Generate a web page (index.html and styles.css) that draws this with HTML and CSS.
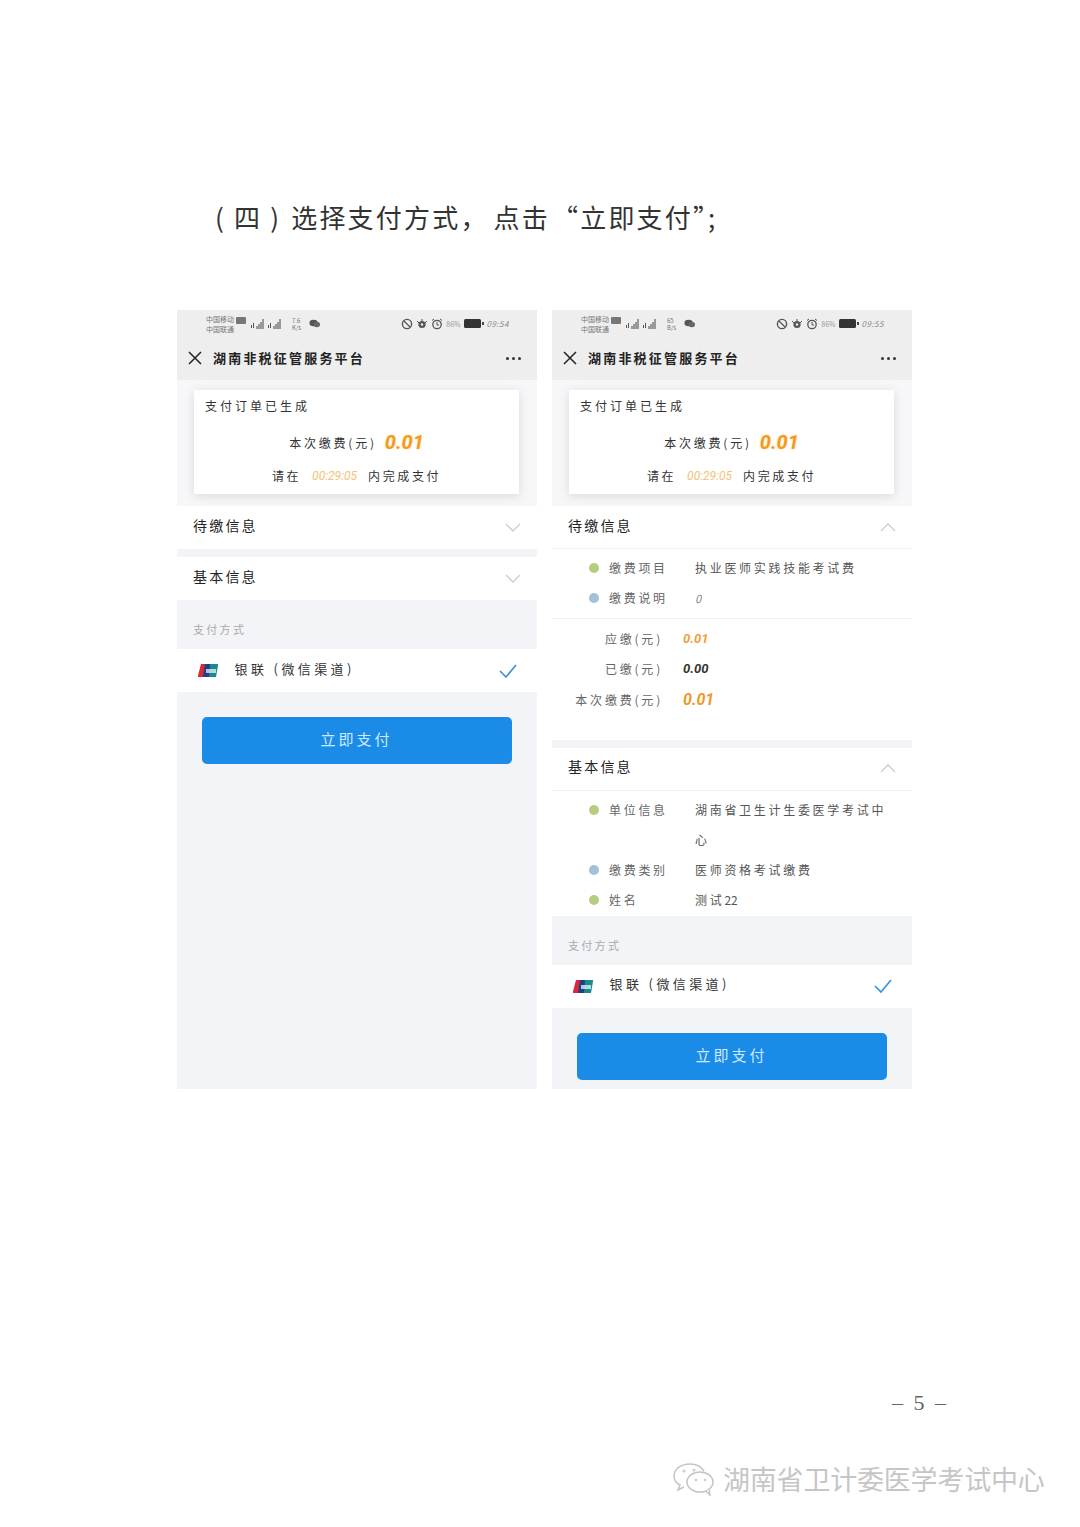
FILE: index.html
```html
<!DOCTYPE html>
<html lang="zh">
<head>
  <meta charset="utf-8">
  <link rel="stylesheet" href="styles.css">
</head>
<body>
  <h1 class="step-title"><span class="paren">(</span>四<span class="paren">)</span>选择支付方式，<span class="after-comma">点击</span><span class="quote-open">“</span>立即支付<span class="tail">”;</span></h1>

  <div class="phones">
    <!-- left: sections collapsed -->
    <div class="phone">
      <div class="top-bar">
        <div class="status-bar">
          <div class="carrier"><span>中国移动</span><span>中国联通</span></div>
          <svg class="hd" viewBox="0 0 10 7"><rect width="10" height="7" rx="1" fill="#777"/></svg>
          <svg class="signal" viewBox="0 0 32 11"><path d="M2 10V7M4 10V5" stroke="#555" fill="none"/><path d="M7 11V8h1v3zM9 11V6h1v5zM11 11V4h1v7zM13 11V1h1v10z" fill="#444"/><path d="M19 10V7M21 10V5" stroke="#555" fill="none"/><path d="M24 11V8h1v3zM26 11V6h1v5zM28 11V4h1v7zM30 11V1h1v10z" fill="#444"/></svg>
          <div class="speed"><span>7.6</span><span>K/s</span></div>
          <svg class="chat" viewBox="0 0 12 9"><ellipse cx="5" cy="4" rx="4.5" ry="3.5" fill="#555"/><ellipse cx="8.5" cy="5.5" rx="3.5" ry="3" fill="#666"/></svg>
          <div class="status-right">
            <svg class="st-icon" viewBox="0 0 12 12"><circle cx="6" cy="6" r="4.6" fill="none" stroke="#555" stroke-width="1.4"/><path d="M3 3l6 6" stroke="#555" stroke-width="1.2"/></svg>
            <svg class="st-icon" viewBox="0 0 12 12"><circle cx="6" cy="6.5" r="3.6" fill="#555"/><path d="M1 3l2 2M11 3L9 5M6 1v3" stroke="#555"/><circle cx="6" cy="6.5" r="1.2" fill="#eee"/></svg>
            <svg class="st-icon" viewBox="0 0 12 12"><circle cx="6" cy="6.5" r="4.2" fill="none" stroke="#555" stroke-width="1.3"/><path d="M6 4v3h2M1 2.5L3 1M11 2.5L9 1" stroke="#555" fill="none"/></svg>
            <span class="pct">86%</span>
            <svg class="battery" viewBox="0 0 20 9"><rect width="17" height="9" rx="1.5" fill="#333"/><rect x="18" y="3" width="2" height="3" fill="#444"/></svg>
            <span class="clock">09:54</span>
          </div>
        </div>
        <div class="nav-bar">
          <svg class="close" viewBox="0 0 14 14"><path d="M1 1l12 12M13 1L1 13" stroke="#222" stroke-width="1.5" fill="none"/></svg>
          <span class="nav-title">湖南非税征管服务平台</span>
          <span class="more"><i></i><i></i><i></i></span>
        </div>
      </div>
      <div class="card-wrap">
        <div class="card">
          <div class="card-head">支付订单已生成</div>
          <div class="card-amount"><span>本次缴费(元)</span><b class="amount-big">0.01</b></div>
          <div class="card-time"><span>请在</span><em>00:29:05</em><span>内完成支付</span></div>
        </div>
      </div>
      <div class="section-head">
        <span>待缴信息</span>
        <svg class="chev" viewBox="0 0 16 9"><path d="M1 1l7 7 7-7" fill="none" stroke="#ccc" stroke-width="1.3"/></svg>
      </div>
      <div class="gap"></div>
      <div class="section-head">
        <span>基本信息</span>
        <svg class="chev" viewBox="0 0 16 9"><path d="M1 1l7 7 7-7" fill="none" stroke="#ccc" stroke-width="1.3"/></svg>
      </div>
      <div class="pay-label">支付方式</div>
      <div class="pay-row">
        <svg class="unionpay" viewBox="0 0 20 13"><path d="M3 0h6L7 13H1a1 1 0 0 1-1-1.4z" fill="#d9283a"/><path d="M7 0h7l-2 13H5z" fill="#1c3f87"/><path d="M12 0h7a1 1 0 0 1 1 1.4L18 13h-7z" fill="#1a8a92"/><rect x="8" y="5" width="10" height="4" fill="#e8f4f4" opacity=".75"/></svg>
        <span class="pay-name">银联 (微信渠道)</span>
        <svg class="tick" viewBox="0 0 18 14"><path d="M1 7l6 6L17 1" fill="none" stroke="#3f93d6" stroke-width="1.7"/></svg>
      </div>
      <div class="pay-foot"><button class="pay-btn"><span>立即支付</span></button></div>
    </div>

    <!-- right: sections expanded -->
    <div class="phone">
      <div class="top-bar">
        <div class="status-bar">
          <div class="carrier"><span>中国移动</span><span>中国联通</span></div>
          <svg class="hd" viewBox="0 0 10 7"><rect width="10" height="7" rx="1" fill="#777"/></svg>
          <svg class="signal" viewBox="0 0 32 11"><path d="M2 10V7M4 10V5" stroke="#555" fill="none"/><path d="M7 11V8h1v3zM9 11V6h1v5zM11 11V4h1v7zM13 11V1h1v10z" fill="#444"/><path d="M19 10V7M21 10V5" stroke="#555" fill="none"/><path d="M24 11V8h1v3zM26 11V6h1v5zM28 11V4h1v7zM30 11V1h1v10z" fill="#444"/></svg>
          <div class="speed"><span>65</span><span>B/s</span></div>
          <svg class="chat" viewBox="0 0 12 9"><ellipse cx="5" cy="4" rx="4.5" ry="3.5" fill="#555"/><ellipse cx="8.5" cy="5.5" rx="3.5" ry="3" fill="#666"/></svg>
          <div class="status-right">
            <svg class="st-icon" viewBox="0 0 12 12"><circle cx="6" cy="6" r="4.6" fill="none" stroke="#555" stroke-width="1.4"/><path d="M3 3l6 6" stroke="#555" stroke-width="1.2"/></svg>
            <svg class="st-icon" viewBox="0 0 12 12"><circle cx="6" cy="6.5" r="3.6" fill="#555"/><path d="M1 3l2 2M11 3L9 5M6 1v3" stroke="#555"/><circle cx="6" cy="6.5" r="1.2" fill="#eee"/></svg>
            <svg class="st-icon" viewBox="0 0 12 12"><circle cx="6" cy="6.5" r="4.2" fill="none" stroke="#555" stroke-width="1.3"/><path d="M6 4v3h2M1 2.5L3 1M11 2.5L9 1" stroke="#555" fill="none"/></svg>
            <span class="pct">86%</span>
            <svg class="battery" viewBox="0 0 20 9"><rect width="17" height="9" rx="1.5" fill="#333"/><rect x="18" y="3" width="2" height="3" fill="#444"/></svg>
            <span class="clock">09:55</span>
          </div>
        </div>
        <div class="nav-bar">
          <svg class="close" viewBox="0 0 14 14"><path d="M1 1l12 12M13 1L1 13" stroke="#222" stroke-width="1.5" fill="none"/></svg>
          <span class="nav-title">湖南非税征管服务平台</span>
          <span class="more"><i></i><i></i><i></i></span>
        </div>
      </div>
      <div class="card-wrap">
        <div class="card">
          <div class="card-head">支付订单已生成</div>
          <div class="card-amount"><span>本次缴费(元)</span><b class="amount-big">0.01</b></div>
          <div class="card-time"><span>请在</span><em>00:29:05</em><span>内完成支付</span></div>
        </div>
      </div>
      <div class="section-head bordered">
        <span>待缴信息</span>
        <svg class="chev" viewBox="0 0 16 9"><path d="M1 8l7-7 7 7" fill="none" stroke="#ccc" stroke-width="1.3"/></svg>
      </div>
      <div class="info-list with-line">
        <div class="info-row"><i class="dot green"></i><span class="info-key">缴费项目</span><span class="info-val">执业医师实践技能考试费</span></div>
        <div class="info-row"><i class="dot blue"></i><span class="info-key">缴费说明</span><span class="info-val zero">0</span></div>
      </div>
      <div class="fee-list">
        <div class="fee-row"><span class="fee-key">应缴(元)</span><b class="fee-val orange">0.01</b></div>
        <div class="fee-row"><span class="fee-key">已缴(元)</span><b class="fee-val">0.00</b></div>
        <div class="fee-row"><span class="fee-key">本次缴费(元)</span><b class="fee-val orange large">0.01</b></div>
      </div>
      <div class="gap"></div>
      <div class="section-head bordered">
        <span>基本信息</span>
        <svg class="chev" viewBox="0 0 16 9"><path d="M1 8l7-7 7 7" fill="none" stroke="#ccc" stroke-width="1.3"/></svg>
      </div>
      <div class="info-list">
        <div class="info-row"><i class="dot green"></i><span class="info-key">单位信息</span><span class="info-val">湖南省卫生计生委医学考试中心</span></div>
        <div class="info-row"><i class="dot blue"></i><span class="info-key">缴费类别</span><span class="info-val">医师资格考试缴费</span></div>
        <div class="info-row"><i class="dot green"></i><span class="info-key">姓名</span><span class="info-val">测试<span class="digits">22</span></span></div>
      </div>
      <div class="pay-label">支付方式</div>
      <div class="pay-row">
        <svg class="unionpay" viewBox="0 0 20 13"><path d="M3 0h6L7 13H1a1 1 0 0 1-1-1.4z" fill="#d9283a"/><path d="M7 0h7l-2 13H5z" fill="#1c3f87"/><path d="M12 0h7a1 1 0 0 1 1 1.4L18 13h-7z" fill="#1a8a92"/><rect x="8" y="5" width="10" height="4" fill="#e8f4f4" opacity=".75"/></svg>
        <span class="pay-name">银联 (微信渠道)</span>
        <svg class="tick" viewBox="0 0 18 14"><path d="M1 7l6 6L17 1" fill="none" stroke="#3f93d6" stroke-width="1.7"/></svg>
      </div>
      <div class="pay-foot"><button class="pay-btn"><span>立即支付</span></button></div>
    </div>
  </div>

  <div class="page-num">– 5 –</div>

  <div class="watermark">
    <svg class="wechat" viewBox="0 0 44 34"><path d="M18 2C9 2 2 7 2 14c0 4 2 7 6 9l-2 5 6-3" fill="none" stroke="#c4c4c4" stroke-width="1.5"/><path d="M18 2c6 0 11 2 14 7" fill="none" stroke="#c4c4c4" stroke-width="1.5"/><ellipse cx="28" cy="20" rx="13" ry="10" fill="#fff" stroke="#c4c4c4" stroke-width="1.5"/><path d="M34 29l4 4-1-6" fill="#fff" stroke="#c4c4c4" stroke-width="1.5"/><circle cx="12" cy="9" r="1.5" fill="#ccc"/><circle cx="22" cy="8" r="1.5" fill="#ccc"/><circle cx="24" cy="18" r="1.3" fill="#ccc"/><circle cx="33" cy="18" r="1.3" fill="#ccc"/></svg>
    <span>湖南省卫计委医学考试中心</span>
  </div>
</body>
</html>
```

FILE: styles.css
```css
* { box-sizing: border-box; }
html, body { margin: 0; padding: 0; }
body {
  width: 1080px;
  height: 1527px;
  overflow: hidden;
  background: #fff;
  color: #222;
  font-family: "Noto Sans CJK SC", "Noto Sans", sans-serif;
}

.step-title {
  margin: 0;
  padding: 199px 0 0 215px;
  height: 310px;
  font-size: 26px;
  line-height: 36px;
  font-weight: 400;
  letter-spacing: 2.2px;
  color: #333;
}
.paren { display: inline-block; width: 19px; }
.step-title .paren + .paren { width: 21px; margin-left: 8px; }
.after-comma { margin-left: 5px; }
.quote-open { margin-left: 2px; }
.tail { letter-spacing: -11px; }

.phones { display: flex; gap: 15px; padding-left: 177px; }
.phone {
  width: 360px;
  height: 779px;
  background: #f3f4f8;
  display: flex;
  flex-direction: column;
  overflow: hidden;
}

.top-bar { background: #eeeeee; height: 70px; flex: none; }
.status-bar {
  height: 27px;
  padding: 0 28px 0 29px;
  display: flex;
  align-items: center;
  color: #777;
  font-size: 7px;
}
.carrier { display: flex; flex-direction: column; width: 30px; line-height: 10px; white-space: nowrap; }
.hd { width: 10px; height: 7px; margin-top: -7px; }
.signal { width: 37px; height: 11px; margin-left: 1px; }
.speed { display: flex; flex-direction: column; font-size: 6px; line-height: 7px; margin-left: 8px; width: 14px; }
.chat { width: 11px; height: 9px; margin-left: 3px; }
.status-right { margin-left: auto; display: flex; align-items: center; gap: 3px; }
.st-icon { width: 12px; height: 12px; }
.pct { color: #999; }
.battery { width: 20px; height: 9px; }
.clock { font-size: 8px; color: #888; font-style: italic; letter-spacing: .5px; }

.nav-bar { height: 42px; padding: 0 16px 0 11px; display: flex; align-items: center; }
.close { width: 14px; height: 14px; flex: none; }
.nav-title { margin-left: 11px; padding-bottom: 2px; font-size: 13px; font-weight: 700; letter-spacing: 2.2px; color: #222; }
.more { margin-left: auto; display: flex; gap: 3px; }
.more i { width: 3px; height: 3px; border-radius: 50%; background: #333; }

.card-wrap { height: 126px; padding: 10px 18px 0 17px; background: #f7f7fa; flex: none; }
.card { height: 104px; background: #fff; box-shadow: 0 2px 10px rgba(0, 0, 0, .12); padding: 7px 11px; }
.card-head { font-size: 12px; line-height: 18px; letter-spacing: 3px; color: #333; }
.card-amount { margin-top: 14px; height: 26px; display: flex; justify-content: center; align-items: center; gap: 8px; font-size: 12px; letter-spacing: 2.8px; color: #333; }
.amount-big { font-size: 20px; font-style: italic; font-weight: 700; color: #f39a1e; letter-spacing: 0; font-family: Roboto, sans-serif; text-shadow: 0 0 3px #ffe0ad; }
.card-time { margin-top: 11px; display: flex; justify-content: center; align-items: center; gap: 11px; font-size: 12px; line-height: 20px; letter-spacing: 2.6px; color: #333; }
.card-time em { font-size: 12px; letter-spacing: 0; color: #f2c27a; font-family: Roboto, sans-serif; }

.section-head {
  height: 43px;
  flex: none;
  background: #fff;
  padding: 0 16px;
  display: flex;
  align-items: center;
  justify-content: space-between;
  font-size: 14px;
  letter-spacing: 2.2px;
  color: #222;
}
.section-head span { padding-bottom: 5px; }
.section-head.bordered { border-bottom: 1px solid #f2f2f2; }
.chev { width: 16px; height: 9px; }
.gap { height: 8px; flex: none; background: #f3f4f8; }

.info-list { background: #fff; padding: 4px 0 1px; flex: none; }
.info-list.with-line { padding-bottom: 5px; border-bottom: 1px solid #f2f2f2; }
.info-row { display: flex; min-height: 30px; padding-left: 37px; font-size: 12px; line-height: 30px; color: #555; letter-spacing: 2.7px; }
.dot { width: 10px; height: 10px; margin-top: 10px; border-radius: 50%; flex: none; }
.dot.green { background: #b5cd7e; }
.dot.blue { background: #a3c0d6; }
.info-key { width: 86px; margin-left: 10px; flex: none; color: #666; }
.info-val { width: 200px; word-break: break-all; }
.info-val.zero { font-style: italic; color: #888; font-size: 11px; }
.digits { letter-spacing: 0; }

.fee-list { background: #fff; padding: 4px 0 25px; flex: none; }
.fee-row { display: flex; align-items: center; height: 30.5px; font-size: 12px; letter-spacing: 2.8px; color: #666; }
.fee-key { width: 111px; text-align: right; white-space: nowrap; }
.fee-val { margin-left: 20px; font-size: 13px; font-style: italic; letter-spacing: 0; color: #333; font-family: Roboto, sans-serif; }
.fee-val.orange { color: #ef9f3c; }
.fee-val.large { font-size: 16px; color: #f2962a; }

.pay-label { height: 49px; padding: 19px 16px 0; flex: none; font-size: 11px; line-height: 20px; letter-spacing: 2.3px; color: #aaa; }
.pay-row { height: 43px; flex: none; background: #fff; padding: 0 20px 0 20.5px; display: flex; align-items: center; }
.unionpay { width: 20px; height: 13px; flex: none; }
.pay-name { margin-left: 17px; padding-bottom: 5px; font-size: 13px; letter-spacing: 3.4px; color: #333; }
.tick { width: 18px; height: 14px; margin-left: auto; }
.pay-foot { padding: 25px 25px 0 24.5px; }
.pay-btn {
  display: block;
  width: 310px;
  height: 47px;
  padding: 0 0 4px;
  border: 0;
  border-radius: 5px;
  background: #1a8ce8;
  color: #cfeaff;
  font-family: inherit;
  font-size: 15px;
  letter-spacing: 3px;
}

.page-num {
  margin-top: 299px;
  padding-left: 892px;
  height: 30px;
  line-height: 30px;
  font-size: 22px;
  word-spacing: 5px;
  color: #666;
  font-family: "Liberation Serif", serif;
}

.watermark {
  margin-top: 43px;
  padding-left: 672px;
  display: flex;
  align-items: center;
  gap: 7px;
  font-size: 27px;
  line-height: 36px;
  color: #c6c6c6;
  letter-spacing: -.2px;
  white-space: nowrap;
}
.wechat { width: 44px; height: 34px; flex: none; }
```
